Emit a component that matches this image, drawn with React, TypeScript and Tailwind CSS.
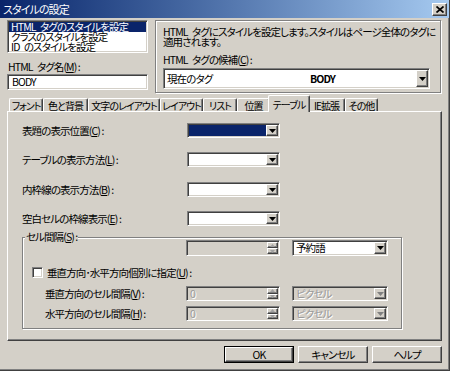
import React from "react";

const FONT =
  "font-['Noto_Sans_CJK_JP','Noto_Sans_CJK_SC',sans-serif] [font-feature-settings:'palt'] tracking-[-0.9px] whitespace-nowrap";

const SUNKEN =
  "border border-t-[#808080] border-l-[#808080] border-b-white border-r-white shadow-[inset_1px_1px_0_#404040,inset_-1px_-1px_0_#d4d0c8]";

const RAISED =
  "border border-t-white border-l-white border-b-[#404040] border-r-[#404040] shadow-[inset_-1px_-1px_0_#808080] bg-[#d4d0c8]";

const ETCHED =
  "border border-[#808080] shadow-[inset_1px_1px_0_#ffffff,1px_1px_0_#ffffff]";

const SP = "\u2002";

function Arrow({ disabled }: { disabled?: boolean }) {
  return (
    <svg width="7" height="4" viewBox="0 0 7 4" className="block">
      <path d="M0 0H7L3.5 4Z" fill={disabled ? "#808080" : "#000000"} />
    </svg>
  );
}

function DropBtn({ disabled }: { disabled?: boolean }) {
  return (
    <div className={`${RAISED} w-[12px] h-full shrink-0 flex items-center justify-center`}>
      <Arrow disabled={disabled} />
    </div>
  );
}

function SpinBtns() {
  return (
    <div className="w-[11px] h-full shrink-0 flex flex-col">
      <div className={`${RAISED} flex-1 flex items-center justify-center`}>
        <svg width="5" height="3" viewBox="0 0 5 3" className="block">
          <path d="M0 3H5L2.5 0Z" fill="#a0a0a0" />
        </svg>
      </div>
      <div className={`${RAISED} flex-1 flex items-center justify-center`}>
        <svg width="5" height="3" viewBox="0 0 5 3" className="block">
          <path d="M0 0H5L2.5 3Z" fill="#a0a0a0" />
        </svg>
      </div>
    </div>
  );
}

function Spin({ value }: { value?: string }) {
  return (
    <div className={`${SUNKEN} w-[94px] h-full p-[1px] flex bg-[#d4d0c8]`}>
      <div className="flex-1 pl-[2px] flex items-center text-[#9a9a9a] [text-shadow:1px_1px_0_#ffffff]">
        {value}
      </div>
      <SpinBtns />
    </div>
  );
}

function RowCombo({ navy }: { navy?: boolean }) {
  return (
    <div className={`${SUNKEN} w-[93px] h-[15px] p-[1px] flex bg-white`}>
      <div className={`flex-1 ${navy ? "bg-[#0a246a]" : "bg-white"}`} />
      <DropBtn />
    </div>
  );
}

function SmallCombo({ text, disabled }: { text: string; disabled?: boolean }) {
  return (
    <div
      className={`${SUNKEN} w-[96px] h-full p-[1px] flex ${
        disabled ? "bg-[#d4d0c8]" : "bg-white"
      }`}
    >
      <div
        className={`flex-1 pl-[2px] flex items-center ${
          disabled ? "text-[#9a9a9a] [text-shadow:1px_1px_0_#ffffff]" : "text-black"
        }`}
      >
        {text}
      </div>
      <DropBtn disabled={disabled} />
    </div>
  );
}

function Tab({ label, w, selected }: { label: string; w: string; selected?: boolean }) {
  if (selected) {
    return (
      <div
        className={`${w} h-[17px] -mx-[2px] -mb-[1px] relative z-10 bg-[#d4d0c8] border-t border-l border-r border-t-white border-l-white border-r-[#404040] rounded-t-[2px] shadow-[inset_-1px_0_0_#808080] flex items-start justify-center pt-[3px] leading-[11px] text-[10px] tracking-[-1px]`}
      >
        {label}
      </div>
    );
  }
  return (
    <div
      className={`${w} h-[13px] bg-[#d4d0c8] border-t border-l border-r border-t-white border-l-white border-r-[#404040] rounded-t-[2px] shadow-[inset_-1px_0_0_#808080] flex items-center justify-center leading-[11px] text-[10px] tracking-[-1px]`}
    >
      {label}
    </div>
  );
}

function U({ c }: { c: string }) {
  return <span className="underline underline-offset-1">{c}</span>;
}

export default function App() {
  return (
    <div
      className={`w-[450px] h-[371px] bg-[#d4d0c8] text-[10.5px] leading-[10px] text-black ${FONT} flex flex-col border-r border-b border-r-[#404040] border-b-[#404040] shadow-[inset_-1px_-1px_0_#808080] overflow-hidden`}
    >
      {/* Title bar */}
      <div className="h-[18px] shrink-0 bg-linear-to-r from-[#0a246a] to-[#a6caf0] flex items-center justify-between pl-[3px] pr-[2px]">
        <span className="text-white text-[11px] leading-none">スタイルの設定</span>
        <div className={`${RAISED} w-[15px] h-[13px] flex items-center justify-center`}>
          <svg width="8" height="7" viewBox="0 0 8 7" className="block">
            <path d="M0.5 0.5L7.5 6.5M7.5 0.5L0.5 6.5" stroke="#000" strokeWidth="1.7" />
          </svg>
        </div>
      </div>

      {/* Top section */}
      <div className="h-[77px] shrink-0 flex gap-[7px] pl-[7px] pt-[2px]">
        <div className="w-[141px] flex flex-col">
          <div className={`${SUNKEN} h-[33px] bg-white p-[1px] flex flex-col`}>
            <div className="h-[10px] bg-[#0a246a] text-white pl-[2px] leading-[10px]">
              {`HTML${SP}タグのスタイルを設定`}
            </div>
            <div className="h-[10px] pl-[2px] leading-[10px]">クラスのスタイルを設定</div>
            <div className="h-[9px] pl-[2px] leading-[10px]">{`ID${SP}のスタイルを設定`}</div>
          </div>
          <div className="mt-[9px] pl-[1px]">
            {`HTML${SP}タグ名(`}
            <U c="M" />) :
          </div>
          <div className={`${SUNKEN} mt-[2px] h-[16px] bg-white p-[1px] pl-[4px] flex items-center`}>
            BODY
          </div>
        </div>

        <div className={`${ETCHED} w-[286px] h-[73px] pl-[7px] pt-[6px] flex flex-col`}>
          <div className="leading-[10px]">
            {`HTML${SP}タグにスタイルを設定します。スタイルはページ全体のタグに`}
            <br />
            適用されます。
          </div>
          <div className="mt-[8px]">
            {`HTML${SP}タグの候補(`}
            <U c="C" />) :
          </div>
          <div className={`${SUNKEN} mt-[3px] w-[267px] h-[21px] bg-white p-[1px] flex`}>
            <div className="flex-1 flex items-center pl-[2px]">
              <span className="w-[143px]">現在のタグ</span>
              <span className="font-bold">BODY</span>
            </div>
            <DropBtn />
          </div>
        </div>
      </div>

      {/* Tabs */}
      <div className="px-[7px] flex flex-col">
        <div className="h-[16px] flex items-end pl-[2px]">
          <Tab label="フォント" w="w-[34px]" />
          <Tab label="色と背景" w="w-[45px]" />
          <Tab label="文字のレイアウト" w="w-[72px]" />
          <Tab label="レイアウト" w="w-[43px]" />
          <Tab label="リスト" w="w-[34px]" />
          <Tab label="位置" w="w-[33px]" />
          <Tab label="テーブル" w="w-[42px]" selected />
          <Tab label="IE拡張" w="w-[37px]" />
          <Tab label="その他" w="w-[33px]" />
        </div>

        <div
          className={`h-[230px] border border-t-white border-l-white border-b-[#404040] border-r-[#404040] shadow-[inset_-1px_-1px_0_#808080] pl-[14px] flex flex-col`}
        >
          <div className="mt-[11px] h-[15px] flex items-center">
            <div className="w-[165px]">
              表題の表示位置(<U c="C" />) :
            </div>
            <RowCombo navy />
          </div>
          <div className="mt-[14px] h-[15px] flex items-center">
            <div className="w-[165px]">
              テーブルの表示方法(<U c="L" />) :
            </div>
            <RowCombo />
          </div>
          <div className="mt-[15px] h-[15px] flex items-center">
            <div className="w-[165px]">
              内枠線の表示方法(<U c="B" />) :
            </div>
            <RowCombo />
          </div>
          <div className="mt-[14px] h-[15px] flex items-center">
            <div className="w-[165px]">
              空白セルの枠線表示(<U c="E" />) :
            </div>
            <RowCombo />
          </div>

          {/* Group box */}
          <div className={`${ETCHED} relative mt-[11px] w-[380px] h-[92px] pt-[2px] flex flex-col`}>
            <div className="absolute -top-[6px] left-[2px] px-[1px] bg-[#d4d0c8] leading-[10px]">
              セル間隔(<U c="S" />) :
            </div>
            <div className="h-[16px] flex">
              <div className="w-[163px]" />
              <Spin />
              <div className="ml-[12px] h-full">
                <SmallCombo text="予約語" />
              </div>
            </div>
            <div className="mt-[10px] h-[13px] flex items-center pl-[9px]">
              <div className={`${SUNKEN} w-[11px] h-[11px] bg-white`} />
              <span className="ml-[4px]">
                垂直方向･水平方向個別に指定(<U c="U" />) :
              </span>
            </div>
            <div className="mt-[7px] h-[15px] flex items-center">
              <div className="w-[163px] pl-[22px]">
                垂直方向のセル間隔(<U c="V" />) :
              </div>
              <Spin value="0" />
              <div className="ml-[12px] h-full">
                <SmallCombo text="ピクセル" disabled />
              </div>
            </div>
            <div className="mt-[5px] h-[15px] flex items-center">
              <div className="w-[163px] pl-[22px]">
                水平方向のセル間隔(<U c="H" />) :
              </div>
              <Spin value="0" />
              <div className="ml-[12px] h-full">
                <SmallCombo text="ピクセル" disabled />
              </div>
            </div>
          </div>
        </div>

        {/* Buttons */}
        <div className="mt-[5px] flex justify-end gap-[4px]">
          <div className="w-[70px] h-[17px] border border-black">
            <div className={`${RAISED} w-full h-full flex items-center justify-center`}>OK</div>
          </div>
          <div className={`${RAISED} w-[70px] h-[17px] flex items-center justify-center`}>
            キャンセル
          </div>
          <div className={`${RAISED} w-[70px] h-[17px] flex items-center justify-center`}>
            ヘルプ
          </div>
        </div>
      </div>
    </div>
  );
}
